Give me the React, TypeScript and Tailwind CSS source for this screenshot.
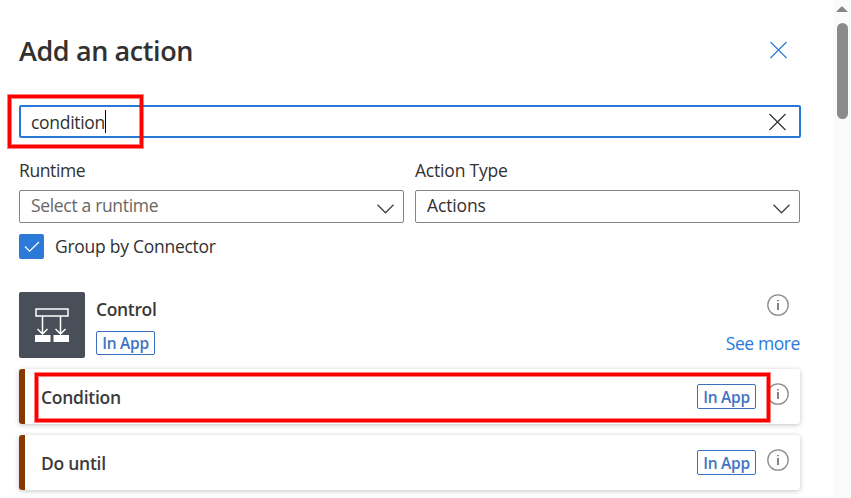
import React from "react";

function InfoIcon() {
  return (
    <svg className="h-[22px] w-[22px] shrink-0" viewBox="0 0 22 22" fill="none">
      <circle cx="11" cy="11" r="10.2" stroke="#8b8b8b" strokeWidth="1.3" />
      <path d="M11 9v7M11 6v1.3" stroke="#777" strokeWidth="1.8" />
    </svg>
  );
}

function CloseIcon({ className }: { className: string }) {
  return (
    <svg className={className} viewBox="0 0 18 18" fill="none" stroke="currentColor" strokeWidth="1.2">
      <path d="M.5 1l16 16M16.5 1L.5 17" />
    </svg>
  );
}

function Badge({ className = "" }: { className?: string }) {
  return (
    <span className={`flex w-[59px] shrink-0 items-center justify-center rounded-[2px] border border-[#3a70bd] pt-[2px] text-[15.5px] font-semibold tracking-[-0.25px] text-[#4273c3] ${className}`}>
      In App
    </span>
  );
}

function Select({ label, value, muted = false }: { label: string; value: string; muted?: boolean }) {
  return (
    <div className="flex w-[385px] flex-col">
      <div className="flex h-[38px] items-center pb-[2px] text-[17.5px]">
        <span className={muted ? "tracking-[-0.4px]" : "tracking-[-0.2px]"}>{label}</span>
      </div>
      <div className="flex h-[33px] items-center justify-between rounded-[2px] border border-[#858585] pr-[9px] pl-[11px] text-[17.5px]">
        <span className={muted ? "mb-[2px] tracking-[-0.33px] text-[#686664]" : "mb-[2px] tracking-[-0.15px]"}>{value}</span>
        <svg className="mt-[4px] h-[10px] w-[18px]" viewBox="0 0 18 10" fill="none" stroke="#42403f" strokeWidth="1.25">
          <path d="M1.5 .8l8 8 8-8" />
        </svg>
      </div>
    </div>
  );
}

function ActionCard({ title }: { title: string }) {
  return (
    <div className="flex h-[55px] items-center rounded-[3px] border-l-[6px] border-[#883800] bg-white pr-[11px] pl-4 shadow-[0_1px_5px_rgba(0,0,0,0.24)]">
      <span className="grow pt-[2px] text-[17.5px] font-semibold tracking-[-0.28px] text-[#3b3a39]">{title}</span>
      <Badge className="h-[25px]" />
      <span className="mb-[5px] ml-[11px] flex">
        <InfoIcon />
      </span>
    </div>
  );
}

export default function App() {
  return (
    <div className="relative flex h-[498px] w-[851px] overflow-hidden bg-white font-['Open_Sans','Noto_Sans',sans-serif] text-[#323130]">
      <main className="flex w-[833px] flex-col pr-[33px] pl-[19px]">
        <header className="flex h-[105px] items-start justify-between pt-[31px] pr-[13px]">
          <h1 className="text-[27px] leading-[40px] font-semibold tracking-[-0.4px]">Add an action</h1>
          <CloseIcon className="mt-[10px] -mr-px h-[18px] w-[18px] text-[#2b79d9]" />
        </header>
        <div className="-mr-px flex h-[33px] shrink-0 items-center justify-between rounded-[2px] border-2 border-[#2878d7] pr-[12px] pl-[10px]">
          <span className="flex items-center text-[17.5px] tracking-[-0.3px]">
            <span className="pt-[2px]">condition</span>
            <span className="h-[23px] w-px bg-black" />
          </span>
          <CloseIcon className="h-[18px] w-[18px] text-[#323130]" />
        </div>
        <div className="mt-[14px] flex gap-[11px]">
          <Select label="Runtime" value="Select a runtime" muted />
          <Select label="Action Type" value="Actions" />
        </div>
        <div className="mt-[11px] flex h-[25px] items-center gap-[11px] text-[17.5px]">
          <span className="flex h-[25px] w-[25px] items-center justify-center rounded-[2px] bg-[#2b79d9]">
            <svg className="h-[12px] w-[16px]" viewBox="0 0 16 12" fill="none" stroke="white" strokeWidth="1.3">
              <path d="M1 5.5l4.6 4.7L15 1" />
            </svg>
          </span>
          <span className="tracking-[-0.27px]">Group by Connector</span>
        </div>
        <section className="mt-[33px] flex h-[66px] shrink-0">
          <span className="h-[66px] w-[66px] rounded-[2px] bg-[#484f58]">
            <svg className="h-[66px] w-[66px]" viewBox="0 0 66 66" fill="none" stroke="white">
              <rect x="17" y="17" width="32" height="7" strokeWidth="1.5" />
              <path d="M23.5 24v18M41.5 24v18M18.5 37l5 5 5-5M36.5 37l5 5 5-5" strokeWidth="1.5" />
              <path d="M16 43h15.5v7H16zM34.5 43H50v7H34.5z" fill="white" stroke="none" />
            </svg>
          </span>
          <div className="ml-[11px] flex grow flex-col">
            <span className="flex h-[39px] items-center pb-[5px] text-[17.5px] font-semibold tracking-[-0.35px] text-[#3b3a39]">Control</span>
            <Badge className="h-[24px]" />
          </div>
          <div className="flex flex-col items-end">
            <span className="mt-[2px] mr-[11px] flex">
              <InfoIcon />
            </span>
            <span className="mt-[14px] text-[17.5px] leading-[26px] tracking-[-0.4px] text-[#2b79d9]">See more</span>
          </div>
        </section>
        <div className="mt-[11px] flex flex-col gap-[11px]">
          <ActionCard title="Condition" />
          <ActionCard title="Do until" />
        </div>
      </main>
      <aside className="flex w-[18px] flex-col items-center bg-[#fbfbfb] pt-[6px]">
        <svg className="h-[6px] w-[12px]" viewBox="0 0 12 6">
          <path d="M0 6l5.4-5.6h1L12 6z" fill="#858585" />
        </svg>
        <div className="mt-[11px] h-[96px] w-[11px] rounded-full bg-[#8b8b8b]" />
      </aside>
      <div className="absolute top-[95px] left-[8px] h-[53px] w-[135px] border-3 border-[#fe0000] shadow-[0_0_0_1px_rgba(254,0,0,0.5),inset_0_0_0_1px_rgba(254,0,0,0.5)]" />
      <div className="absolute top-[373px] left-[35px] h-[49px] w-[735px] border-3 border-[#fe0000] shadow-[0_0_0_1px_rgba(254,0,0,0.5),inset_0_0_0_1px_rgba(254,0,0,0.5)]" />
    </div>
  );
}
